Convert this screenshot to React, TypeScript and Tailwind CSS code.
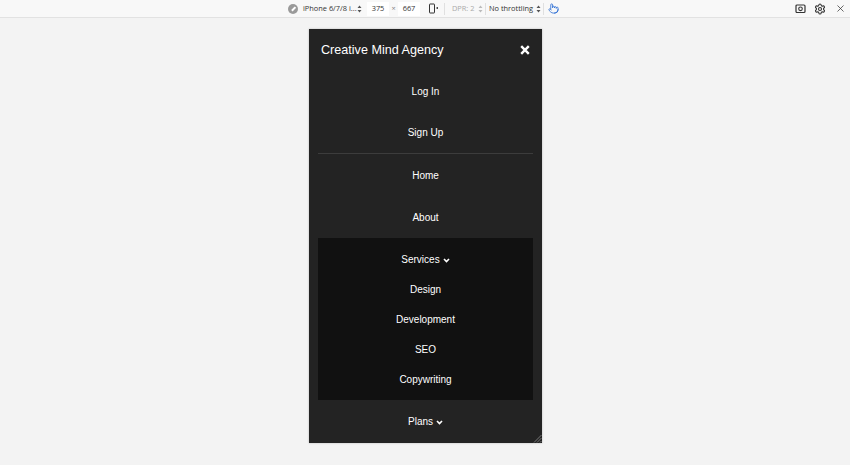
import { Settings, X, Pointer } from 'lucide-react';

function UpDown({ className = '' }: { className?: string }) {
  return (
    <svg width="5" height="8" viewBox="0 0 5 8" className={className}>
      <path d="M2.5 0.5 L4.5 3 H0.5 Z M2.5 7.5 L4.5 5 H0.5 Z" fill="currentColor" />
    </svg>
  );
}

function Chevron() {
  return (
    <svg width="7" height="5" viewBox="0 0 7 5" className="ml-[3px] mt-[2px]">
      <polyline points="1,1 3.5,3.6 6,1" fill="none" stroke="white" strokeWidth="1.6" />
    </svg>
  );
}

function Toolbar() {
  return (
    <div className="h-[18px] bg-[#f8f8f8] border-b border-[#e2e2e2] flex items-center text-[7.4px] text-[#333] font-['Open_Sans',sans-serif] whitespace-nowrap">
      <div className="flex items-center ml-[288px]">
        <span className="shrink-0 w-[10px] h-[10px] rounded-full bg-[#9a9a9a] flex items-center justify-center">
          <span className="w-[5px] h-[1.5px] bg-white rotate-[-45deg]" />
        </span>
        <span className="shrink-0 ml-[5px] w-[54px]">iPhone 6/7/8 i...</span>
        <UpDown className="shrink-0 text-[#555]" />
        <span className="shrink-0 ml-[5px] w-[22px] h-[14px] bg-white flex items-center justify-center">375</span>
        <span className="shrink-0 w-[9px] text-center text-[#888]">×</span>
        <span className="shrink-0 w-[22px] h-[14px] bg-white flex items-center justify-center">667</span>
        <svg width="11" height="11" viewBox="0 0 11 11" className="shrink-0 ml-[8px]">
          <rect x="1.5" y="1" width="5" height="9" rx="0.5" fill="none" stroke="#333" strokeWidth="1" />
          <path d="M8 5 L10 5 M9 4 L10 5 L9 6" fill="none" stroke="#333" strokeWidth="0.8" />
        </svg>
        <span className="shrink-0 ml-[5px] w-px h-[12px] bg-[#e0e0e0]" />
        <span className="shrink-0 ml-[7px] w-[26px] text-[#aaa]">DPR: 2</span>
        <UpDown className="shrink-0 text-[#bbb]" />
        <span className="shrink-0 ml-[2px] w-px h-[12px] bg-[#e0e0e0]" />
        <span className="shrink-0 ml-[3px] w-[47px]">No throttling</span>
        <UpDown className="shrink-0 text-[#555]" />
        <span className="shrink-0 ml-[2px] w-px h-[12px] bg-[#e0e0e0]" />
        <Pointer size={11} className="shrink-0 ml-[4px] text-[#2d6fd4]" strokeWidth={1.8} />
      </div>
      <div className="ml-auto flex items-center mr-[4px] gap-[8px] text-[#333]">
        <svg width="11" height="11" viewBox="0 0 11 11">
          <rect x="1" y="2" width="9" height="7.5" rx="1" fill="none" stroke="#333" strokeWidth="1.2" />
          <circle cx="5.5" cy="5.8" r="1.8" fill="none" stroke="#333" strokeWidth="1.1" />
        </svg>
        <Settings size={12} strokeWidth={2.2} />
        <X size={11} strokeWidth={1.6} className="ml-[1px]" />
      </div>
    </div>
  );
}

function Item({ label, chevron, h = 'h-[42px]' }: { label: string; chevron?: boolean; h?: string }) {
  return (
    <div className={`${h} flex items-center justify-center text-[10px] text-white`}>
      {label}
      {chevron && <Chevron />}
    </div>
  );
}

function SubItem({ label, chevron }: { label: string; chevron?: boolean }) {
  return (
    <div className="h-[30px] flex items-center justify-center text-[10px] text-white">
      {label}
      {chevron && <Chevron />}
    </div>
  );
}

function App() {
  return (
    <div className="w-[850px] h-[465px] bg-[#f3f3f3] overflow-hidden">
      <Toolbar />
      <div className="pt-[11px] flex justify-center">
        <div className="relative w-[233px] h-[414px] ml-px bg-[#232323] shadow-[0_0_2px_rgba(0,0,0,0.25)] font-['Liberation_Sans',Arial,sans-serif] overflow-hidden">
          <div className="h-[41px] flex items-center justify-between pl-[12px] pr-[12px]">
            <span className="text-[12.6px] text-white mt-[2px]">Creative Mind Agency</span>
            <svg width="10" height="10" viewBox="0 0 10 10" className="ml-auto mr-[0px]">
              <path d="M1.2 1.2 L8.8 8.8 M8.8 1.2 L1.2 8.8" stroke="white" strokeWidth="2.4" />
            </svg>
          </div>
          <Item label="Log In" />
          <Item label="Sign Up" h="h-[41px]" />
          <div className="mx-[9px] h-px bg-[#3c3c3c]" />
          <Item label="Home" />
          <Item label="About" />
          <div className="mx-[9px] bg-[#111111] py-[6px]">
            <SubItem label="Services" chevron />
            <SubItem label="Design" />
            <SubItem label="Development" />
            <SubItem label="SEO" />
            <SubItem label="Copywriting" />
          </div>
          <Item label="Plans" chevron />
          <svg width="9" height="9" viewBox="0 0 9 9" className="absolute right-0 bottom-0">
            <path d="M8.5 1 L1 8.5 M8.5 4 L4 8.5 M8.5 7 L7 8.5" stroke="#8a8a8a" strokeWidth="0.8" />
          </svg>
        </div>
      </div>
    </div>
  );
}

export default App;
